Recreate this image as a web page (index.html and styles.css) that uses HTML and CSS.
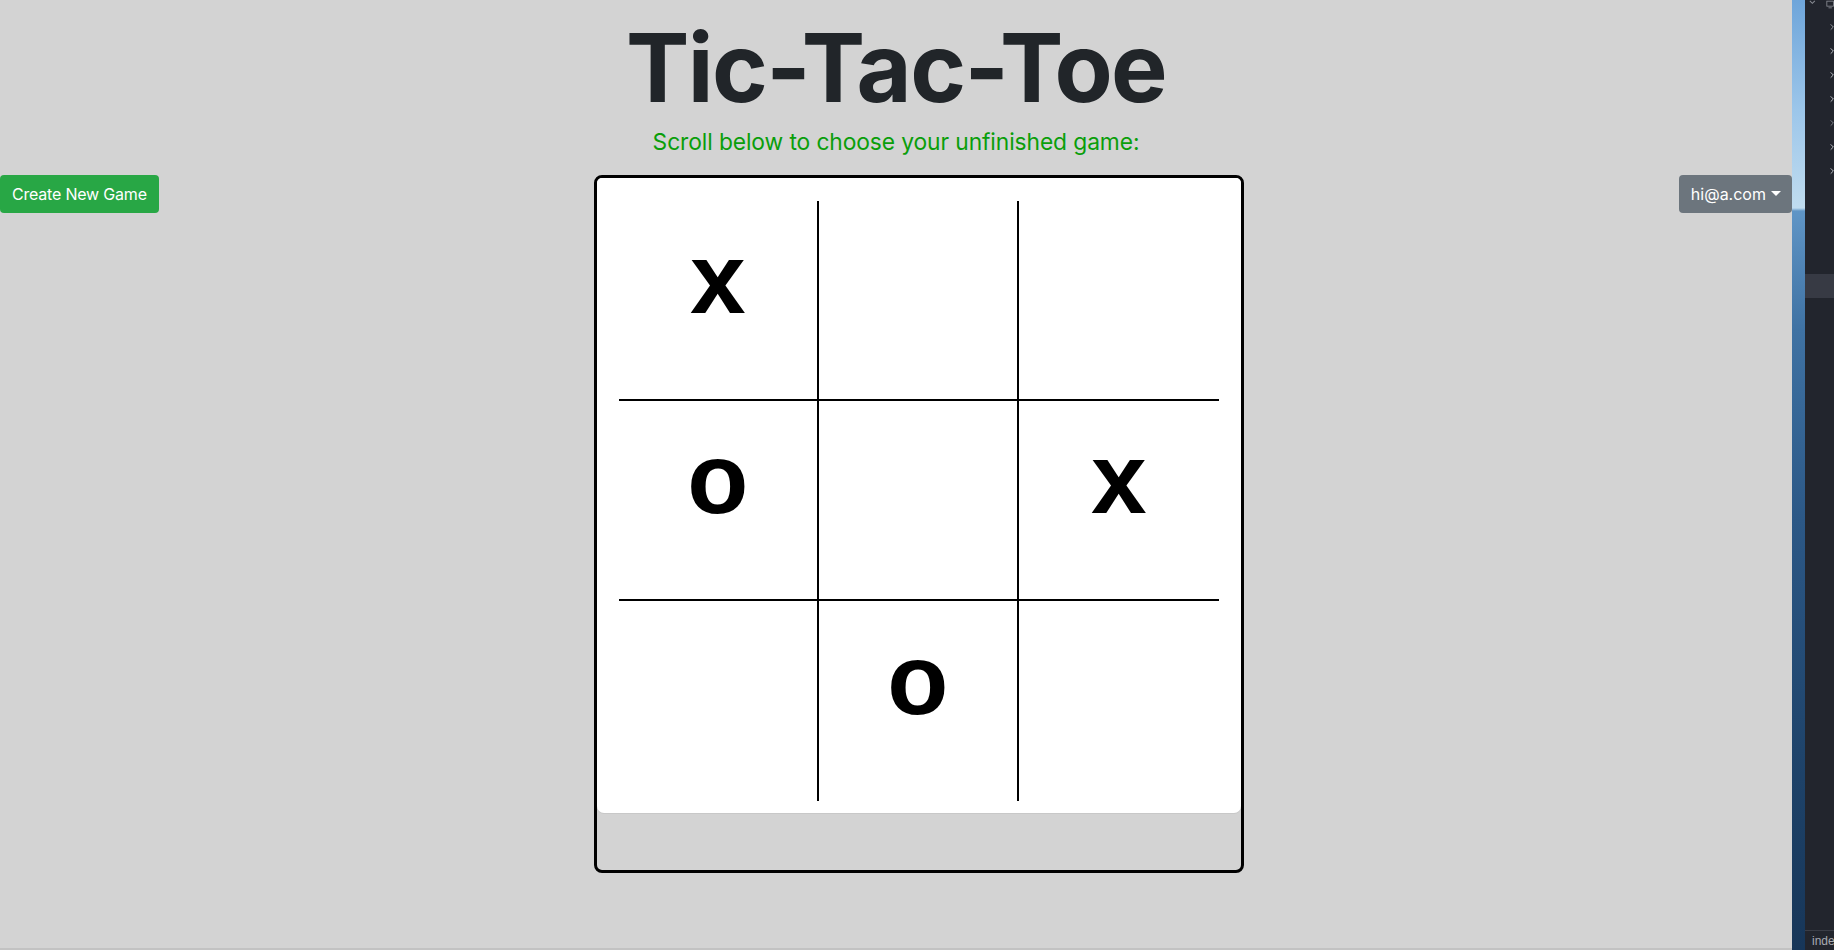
FILE: index.html
```html
<!DOCTYPE html>
<html lang="en">
<head>
<meta charset="utf-8">
<title>Tic-Tac-Toe</title>
<link rel="stylesheet" href="styles.css">
</head>
<body>
<div class="screen">
  <main class="viewport">
    <h1 class="title">Tic-Tac-Toe</h1>
    <p class="subtitle">Scroll below to choose your unfinished game:</p>
    <div class="toolbar">
      <button class="btn btn-success">Create New Game</button>
      <div class="board-frame">
        <div class="board-card">
          <div class="board">
            <div class="cell c-r c-b"><span class="mark">x</span></div>
            <div class="cell c-r c-b"></div>
            <div class="cell c-b"></div>
            <div class="cell c-r c-b"><span class="mark">o</span></div>
            <div class="cell c-r c-b"></div>
            <div class="cell c-b"><span class="mark">x</span></div>
            <div class="cell c-r"></div>
            <div class="cell c-r"><span class="mark">o</span></div>
            <div class="cell"></div>
          </div>
        </div>
      </div>
      <button class="btn btn-secondary">hi@a.com<span class="caret"></span></button>
    </div>
    <div class="taskbar-edge"></div>
  </main>
  <div class="wallpaper"></div>
  <aside class="editor">
    <div class="editor-top">
      <svg class="top-caret" width="8" height="5" viewBox="0 0 8 5"><path d="M1 0.5l3 3 3-3" fill="none" stroke="#8a8d95" stroke-width="1.2"/></svg>
      <svg class="top-icon" width="10" height="9" viewBox="0 0 10 9"><rect x="1" y="0.5" width="8" height="6" fill="none" stroke="#8a8d95" stroke-width="1"/><path d="M3 8.5h4" stroke="#8a8d95" stroke-width="1"/></svg>
    </div>
    <ul class="tree">
      <li><svg viewBox="0 0 6 10"><path d="M1 1l4 4-4 4" fill="none" stroke="#9da0a8" stroke-width="1.4"/></svg></li>
      <li><svg viewBox="0 0 6 10"><path d="M1 1l4 4-4 4" fill="none" stroke="#c3c6cc" stroke-width="1.4"/></svg></li>
      <li><svg viewBox="0 0 6 10"><path d="M1 1l4 4-4 4" fill="none" stroke="#c3c6cc" stroke-width="1.4"/></svg></li>
      <li><svg viewBox="0 0 6 10"><path d="M1 1l4 4-4 4" fill="none" stroke="#c3c6cc" stroke-width="1.4"/></svg></li>
      <li><svg viewBox="0 0 6 10"><path d="M1 1l4 4-4 4" fill="none" stroke="#7f828a" stroke-width="1.4"/></svg></li>
      <li><svg viewBox="0 0 6 10"><path d="M1 1l4 4-4 4" fill="none" stroke="#c3c6cc" stroke-width="1.4"/></svg></li>
      <li><svg viewBox="0 0 6 10"><path d="M1 1l4 4-4 4" fill="none" stroke="#c3c6cc" stroke-width="1.4"/></svg></li>
    </ul>
    <div class="tree-selected"></div>
    <div class="editor-spacer"></div>
    <div class="editor-tab">inde</div>
  </aside>
</div>
</body>
</html>
```

FILE: styles.css
```css
* { box-sizing: border-box; }

html, body {
  margin: 0;
  padding: 0;
  height: 100%;
  overflow: hidden;
}

body {
  font-family: Inter, "Noto Sans", "Liberation Sans", sans-serif;
  background: #22252d;
}

.screen {
  display: flex;
  height: 950px;
  width: 1834px;
}

.viewport {
  width: 1792px;
  flex: none;
  background: #d3d3d3;
  display: flex;
  flex-direction: column;
  align-items: center;
}

.title {
  margin: 9px 0 0;
  font-size: 95px;
  font-weight: 700;
  line-height: 118px;
  letter-spacing: -1.6px;
  color: #212529;
}

.subtitle {
  margin: 1px 0 0;
  font-size: 22.8px;
  line-height: 28px;
  color: #0a9e0a;
  letter-spacing: -0.1px;
}

.toolbar {
  margin-top: 19px;
  width: 100%;
  display: flex;
  justify-content: space-between;
  align-items: flex-start;
}

.btn {
  font-family: Inter, "Noto Sans", "Liberation Sans", sans-serif;
  font-size: 16px;
  line-height: 24px;
  padding: 7px 12px;
  border: 0;
  border-radius: 4px;
  color: #fff;
  display: inline-flex;
  align-items: center;
  height: 38px;
}

.btn-success {
  background: #28a745;
  letter-spacing: -0.2px;
}
.btn-secondary { background: #6c757d; padding: 7px 11px 7px 12px; }

.caret {
  display: inline-block;
  margin-left: 5px;
  width: 0;
  height: 0;
  border-top: 5px solid #fff;
  border-left: 5px solid transparent;
  border-right: 5px solid transparent;
  margin-top: -2px;
}

.board-frame {
  width: 650px;
  height: 698px;
  border: 3px solid #000;
  border-radius: 8px;
  background: #d3d3d3;
}

.board-card {
  background: #fff;
  border-radius: 5px 5px 7px 7px;
  padding: 23px 22px 12px 22px;
  box-shadow: 0 1px 0 #c8c8c8;
}

.board {
  display: grid;
  grid-template-columns: repeat(3, 200px);
  grid-template-rows: repeat(3, 200px);
}

.cell {
  display: flex;
  align-items: center;
  justify-content: center;
  padding-bottom: 44px;
}

.c-r { border-right: 2px solid #000; }
.c-b { border-bottom: 2px solid #000; }

.mark {
  font-family: "Liberation Sans", Arial, sans-serif;
  font-weight: 700;
  font-size: 100px;
  line-height: 112px;
  color: #000;
}

.taskbar-edge {
  margin-top: auto;
  align-self: stretch;
  height: 2px;
  background: linear-gradient(to right, #c2c2c2 0, #c2c2c2 100%);
}

/* desktop decoration to the right of the browser window */
.wallpaper {
  width: 13px;
  flex: none;
  background: linear-gradient(to bottom,
    #6ea5da 0px, #9cc6ea 110px, #c0dcef 208px,
    #5f95c6 211px, #3f72a3 330px, #2c5886 520px,
    #1f446b 750px, #173658 950px);
}

.editor {
  flex: 1;
  background: #22252d;
  display: flex;
  flex-direction: column;
  overflow: hidden;
}

.editor-top {
  height: 14px;
  display: flex;
  align-items: flex-start;
  gap: 10px;
  padding-left: 4px;
}

.tree {
  list-style: none;
  margin: 8px 0 0;
  padding: 0 0 0 25px;
  display: flex;
  flex-direction: column;
  gap: 14px;
}

.tree li {
  height: 10px;
  display: flex;
}

.tree svg {
  width: 6px;
  height: 10px;
}

.tree-selected {
  margin-top: 98px;
  height: 24px;
  background: #373a44;
}

.editor-spacer { flex: 1; }

.editor-tab {
  border-top: 1px solid #3b3e47;
  height: 20px;
  color: #a7aab1;
  font-family: "Liberation Sans", sans-serif;
  font-size: 12px;
  line-height: 20px;
  padding-left: 7px;
  white-space: nowrap;
}
```
